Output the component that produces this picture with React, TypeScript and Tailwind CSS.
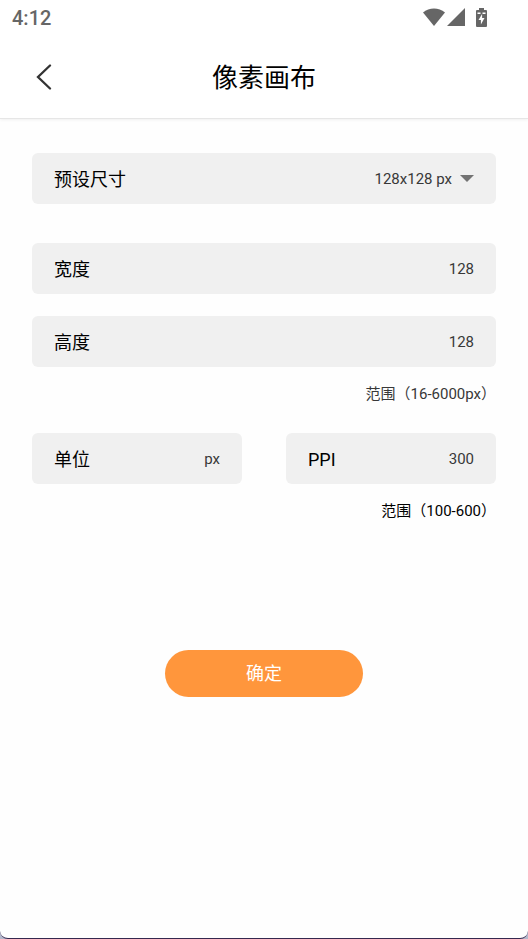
import { useState } from "react";
import type { ReactNode } from "react";

const fieldClass =
  "min-w-0 flex-1 appearance-none bg-transparent text-right text-[15px] leading-6 text-[#383838] outline-none";

function Field({ id, label, children }: { id: string; label: string; children: ReactNode }) {
  return (
    <div className="flex h-[51px] min-w-0 items-center rounded-md bg-[#f0f0f0] px-[22px]">
      <label htmlFor={id} className="shrink-0 pt-0.5 text-lg leading-6 text-black">
        {label}
      </label>
      {children}
    </div>
  );
}

function StatusBar() {
  return (
    <div className="flex h-9 items-center justify-between pr-10 pl-3 text-[#666666]">
      <span className="text-xl leading-6 font-medium">4:12</span>
      <div className="flex items-center pb-0.5">
        <svg className="h-[18px] w-[22px]" viewBox="0 0 22 18" fill="currentColor" aria-hidden="true">
          <path d="M0 4.500C6.200-1 15.800-1 22 4.500L11 18Z" />
        </svg>
        <svg className="ml-[2px] h-[18px] w-[18px]" viewBox="0 0 18 18" fill="currentColor" aria-hidden="true">
          <path d="M18 0V18H0Z" />
        </svg>
        <svg className="ml-[11px] h-[19px] w-3" viewBox="0 0 12 19" aria-hidden="true">
          <path
            fill="currentColor"
            d="M3 0H8V2H10Q11 2 11 3V18Q11 19 10 19H1Q0 19 0 18V3Q0 2 1 2H3Z"
          />
          <path fill="#ffffff" d="M1.500 4.500H4.500V6H1.500ZM6.500 4.500H9.500V6H6.500ZM6.100 6L2.500 12H4.900V16.500L8.500 10H6.100Z" />
        </svg>
      </div>
    </div>
  );
}

export default function App() {
  const [width, setWidth] = useState("128");
  const [height, setHeight] = useState("128");
  const [ppi, setPpi] = useState("300");

  return (
    <div className="flex min-h-screen flex-col bg-[#b4b9cc] font-[Roboto,'Noto_Sans_CJK_SC',sans-serif]">
      <div className="flex flex-1 flex-col rounded-b-lg border-b border-[#35284f] bg-[#fefefe]">
        <header className="border-b border-[#e6e6e6] bg-white shadow-[0_1px_3px_rgba(0,0,0,0.06)]">
          <StatusBar />
          <div className="grid h-[82px] grid-cols-[1fr_auto_1fr] items-center px-8">
            <button type="button" aria-label="返回" className="flex size-6 items-center justify-center">
              <svg className="h-[26px] w-4" viewBox="0 0 16 26" fill="none" aria-hidden="true">
                <path d="M14 1.500L2 13L14 24.500" stroke="#333333" strokeWidth="2.300" strokeLinecap="round" />
              </svg>
            </button>
            <h1 className="pt-0.5 text-[26px] leading-9 text-black">像素画布</h1>
          </div>
        </header>

        <form className="flex flex-col px-8 pt-[34px]" onSubmit={(e) => e.preventDefault()}>
          <Field id="preset" label="预设尺寸">
            <select id="preset" className={fieldClass}>
              <option>128x128 px</option>
            </select>
            <svg className="pointer-events-none ml-2 h-[7px] w-3.5" viewBox="0 0 14 7" aria-hidden="true">
              <path d="M0 0H14L7 7Z" fill="#737373" />
            </svg>
          </Field>

          <div className="mt-[39px] flex flex-col gap-[22px]">
            <Field id="width" label="宽度">
              <input id="width" className={fieldClass} value={width} onChange={(e) => setWidth(e.target.value)} />
            </Field>
            <Field id="height" label="高度">
              <input id="height" className={fieldClass} value={height} onChange={(e) => setHeight(e.target.value)} />
            </Field>
          </div>
          <p className="mt-[15px] text-right text-[15px] leading-6 text-[#383838]">范围（16-6000px）</p>

          <div className="mt-[27px] grid grid-cols-2 gap-11">
            <Field id="unit" label="单位">
              <select id="unit" className={fieldClass}>
                <option>px</option>
              </select>
            </Field>
            <Field id="ppi" label="PPI">
              <input id="ppi" className={fieldClass} value={ppi} onChange={(e) => setPpi(e.target.value)} />
            </Field>
          </div>
          <p className="mt-[15px] text-right text-[15px] leading-6 text-black">范围（100-600）</p>

          <button
            type="submit"
            className="mt-[127px] h-[47px] w-[198px] self-center rounded-full bg-[#ff963c] text-lg leading-6 text-white"
          >
            确定
          </button>
        </form>
      </div>
    </div>
  );
}
